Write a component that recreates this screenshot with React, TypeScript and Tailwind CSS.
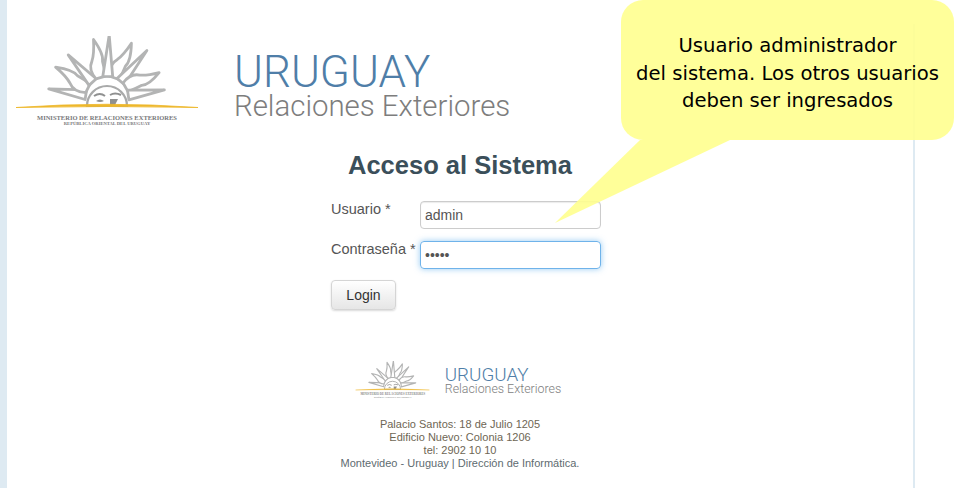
const RAYS = [
	{ deg: -171, long: 59, wavy: false },
	{ deg: -153, long: 60, wavy: true },
	{ deg: -132, long: 58, wavy: false },
	{ deg: -107, long: 60, wavy: true },
	{ deg: -70, long: 60, wavy: true },
	{ deg: -50, long: 62, wavy: false },
	{ deg: -30, long: 58, wavy: true },
	{ deg: -8, long: 58, wavy: false },
	{ deg: -88, long: 63, wavy: false },
];

function Sun({ className }: { className: string }) {
	const ray = (deg: number, long: number, wavy: boolean) => {
		const a = (deg * Math.PI) / 180;
		const p = (r: number, off: number) => {
			const t = a + (off * Math.PI) / 180;
			return `${(92 + r * Math.cos(t)).toFixed(1)} ${(62 + r * Math.sin(t)).toFixed(1)}`;
		};
		if (wavy) {
			return `M${p(22, -13)} Q${p(34, -17)} ${p(40, -5)} Q${p(46, 1)} ${p(long, 4)} Q${p(44, 13)} ${p(37, 10)} Q${p(30, 12)} ${p(22, 13)} Z`;
		}
		return `M${p(22, -13)} L${p(long, 0)} L${p(22, 13)} Z`;
	};
	return (
		<svg viewBox="0 0 184 74" className={className}>
			{RAYS.map((r) => (
				<path key={r.deg} d={ray(r.deg, r.long, r.wavy)} fill="#fff" stroke="#b3b4b4" strokeWidth="2.8" strokeLinejoin="round" />
			))}
			<path d="M72 70 A20 20 0 1 1 112 70 Z" fill="#fff" stroke="#a9aaaa" strokeWidth="2.2" />
			<path d="M79 60 Q85 56 90 60 M95 59 Q100 56 106 59" fill="none" stroke="#8f9090" strokeWidth="2" />
			<path d="M81 65 Q85 62 89 65 Q85 67 81 65 Z M95 63 L103 63 L100 69 L95 69 Z" fill="#8f9090" />
			<path d="M1 71.5 Q92 65 183 71.5 Q92 69.5 1 71.5 Z" fill="#eeb72b" stroke="#eeb72b" strokeWidth="0.8" />
		</svg>
	);
}

function Logo({ small }: { small?: boolean }) {
	if (small) {
		return (
			<div className="flex w-[78px] flex-col items-center">
				<Sun className="h-[30px] w-[75px]" />
				<p className="mt-px whitespace-nowrap font-['Liberation_Serif',serif] text-[3px] leading-[4px] font-bold text-[#8a8a8a]">
					MINISTERIO DE RELACIONES EXTERIORES
				</p>
				<p className="whitespace-nowrap font-['Liberation_Serif',serif] text-[2px] leading-[3px] font-bold text-[#8a8a8a]">
					REPÚBLICA ORIENTAL DEL URUGUAY
				</p>
			</div>
		);
	}
	return (
		<div className="flex w-[184px] flex-col items-center">
			<Sun className="h-[74px] w-[184px]" />
			<p className="mt-[4px] whitespace-nowrap font-['Liberation_Serif',serif] text-[6.5px] leading-[7px] font-bold text-[#77787a]">
				MINISTERIO DE RELACIONES EXTERIORES
			</p>
			<p className="whitespace-nowrap font-['Liberation_Serif',serif] text-[4.6px] leading-[6px] font-bold text-[#77787a]">
				REPÚBLICA ORIENTAL DEL URUGUAY
			</p>
		</div>
	);
}

export default function App() {
	return (
		<div className="relative flex h-[488px] w-[954px] overflow-hidden bg-white font-['Liberation_Sans',sans-serif]">
			<div className="w-[7px] shrink-0 bg-[#deeaf2]" />

			<main className="mt-6 flex w-[908px] flex-col border-r-2 border-[#deeaf2]">
				<header className="flex h-[103px] pt-3 pl-[8px]">
					<Logo />
					<div className="ml-[35px] pt-[16px]">
						<div className="font-['Roboto',sans-serif] text-[44px] leading-[40px] font-light text-[#4f7ea8]">URUGUAY</div>
						<div className="mt-px font-['Roboto',sans-serif] text-[29.4px] leading-[26px] font-light text-[#7d7d7d]">Relaciones Exteriores</div>
					</div>
				</header>

				<h1 className="mt-[23px] text-center text-[25.5px] leading-[30px] font-bold text-[#3b4f5a]">Acceso al Sistema</h1>

				<form className="mt-[21px] ml-[324px] flex w-[270px] flex-col">
					<div className="flex">
						<label className="mt-[-2px] w-[89px] text-[14.5px] leading-5 text-[#555]">Usuario *</label>
						<input
							readOnly
							value="admin"
							className="h-7 w-[181px] rounded border border-[#ccc] px-1 text-sm text-[#555] shadow-[inset_0_1px_1px_rgba(0,0,0,0.08)] outline-none"
						/>
					</div>
					<div className="mt-3 flex">
						<label className="mt-[-2px] w-[89px] text-[14.5px] leading-5 text-[#555]">Contraseña *</label>
						<input
							readOnly
							type="password"
							value="admin"
							className="h-7 w-[181px] rounded border border-[#6fb3ea] px-1 text-sm text-[#555] shadow-[0_0_6px_rgba(82,168,236,0.6)] outline-none"
						/>
					</div>
					<button
						type="button"
						className="mt-[11px] h-[30px] w-[65px] rounded border border-[#d5d5d5] bg-gradient-to-b from-white to-[#e6e6e6] text-sm text-[#333] shadow-[0_1px_2px_rgba(0,0,0,0.15)]"
					>
						Login
					</button>
				</form>

				<footer className="mt-[51px] flex flex-col items-center">
					<div className="flex items-start pr-[5px]">
						<Logo small />
						<div className="ml-[13px] pt-[6px]">
							<div className="font-['Roboto',sans-serif] text-[18.8px] leading-[16px] font-light text-[#4f7ea8]">URUGUAY</div>
							<div className="font-['Roboto',sans-serif] text-[12.4px] leading-[12px] font-light text-[#7d7d7d]">Relaciones Exteriores</div>
						</div>
					</div>
					<address className="mt-[19px] text-center text-[11px] leading-[13px] text-[#6e6654] not-italic">
						<div>Palacio Santos: 18 de Julio 1205</div>
						<div>Edificio Nuevo: Colonia 1206</div>
						<div>tel: 2902 10 10</div>
						<div className="text-[#5e6b70]">Montevideo - Uruguay | Dirección de Informática.</div>
					</address>
				</footer>
			</main>

			{/* comment balloon, lies over the page */}
			<svg viewBox="0 0 954 488" className="pointer-events-none absolute inset-0 h-[488px] w-[954px] opacity-90">
				<path d="M555 223 L640 140 L730 140 Z" fill="#ffff8f" />
			</svg>
			<div className="absolute top-0 right-0 h-[140px] w-[333px] rounded-[22px] bg-[#ffff8f]/90 pt-[32px] text-center font-['DejaVu_Sans',sans-serif] text-[19.6px] leading-[27.5px] whitespace-nowrap text-black">
				<div>Usuario administrador</div>
				<div>del sistema. Los otros usuarios</div>
				<div>deben ser ingresados</div>
			</div>
		</div>
	);
}
